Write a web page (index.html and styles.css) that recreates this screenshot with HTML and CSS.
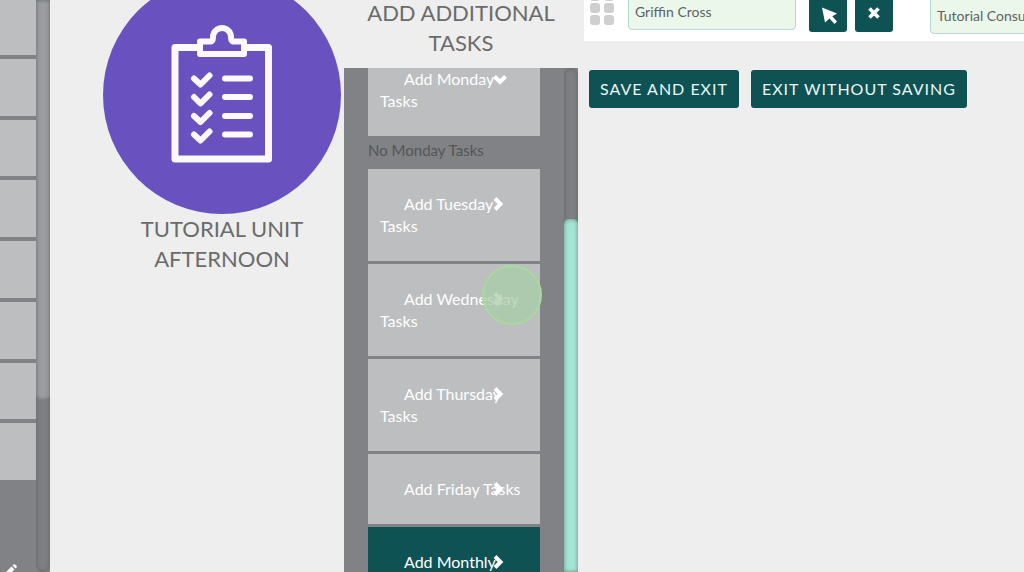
FILE: index.html
```
<!DOCTYPE html>
<html lang="en">
<head>
<meta charset="utf-8">
<title>Tutorial Unit Tasks</title>
<link rel="stylesheet" href="styles.css">
</head>
<body>
<div class="app">
  <aside class="rail">
    <div class="rail-main">
      <div class="rail-cells">
        <div class="cell"></div><div class="cell"></div><div class="cell"></div><div class="cell"></div>
        <div class="cell"></div><div class="cell"></div><div class="cell"></div><div class="cell"></div>
      </div>
      <svg class="pencil" width="12" height="12" viewBox="0 0 12 12" aria-hidden="true"><path d="M0 9 L6.500 2.500 L9.500 5.500 L3 12 L0 12Z M7.500 1.500 L8.500 .5 Q9.500 -.2 10.400 .7 L11.500 1.800 Q12.200 2.700 11.500 3.500 L10.500 4.500Z" fill="#fff"/></svg>
    </div>
    <div class="track rail-track"><div class="thumb rail-thumb"></div></div>
  </aside>

  <section class="unit">
    <div class="unit-disc">
      <svg width="102" height="140" viewBox="0 0 102 140" fill="none" stroke="#fbf8ff" aria-hidden="true">
        <path d="M27 22.500 H4 V134 H97.500 V22.500 H74" stroke-width="7" stroke-linejoin="round"/>
        <path d="M29 16.500 H40 Q42 16 42 12 A9 9 0 0 1 60 12 Q60 16 62 16.500 H73 V29 H29Z" stroke-width="6" stroke-linejoin="round"/>
        <g stroke-width="6" stroke-linecap="round" stroke-linejoin="round">
          <path d="M23 53.500 L29.500 59.500 L38.500 50.500"/><path d="M23 72 L29.500 78.500 L38.500 69.500"/>
          <path d="M23 91 L29.500 97 L38.500 88"/><path d="M23 109.500 L29.500 115.500 L38.500 106.500"/>
          <path d="M54 53.500 H79 M54 72 H79 M54 91 H79 M54 109.500 H79"/>
        </g>
      </svg>
    </div>
    <h2 class="heading">Tutorial Unit Afternoon</h2>
  </section>

  <section class="extra">
    <h2 class="heading extra-heading">Add Additional Tasks</h2>
    <div class="panel">
      <div class="task-list">
        <button class="task" type="button">Add Monday Tasks<svg class="chev" viewBox="0 0 16 16" aria-hidden="true"><path d="M2.500 5.500 L8 11 L13.500 5.500"/></svg></button>
        <p class="empty">No Monday Tasks</p>
        <button class="task" type="button">Add Tuesday Tasks<svg class="chev" viewBox="0 0 16 16" aria-hidden="true"><path d="M3 2.500 L8.500 8 L3 13.500"/></svg></button>
        <button class="task" type="button">Add Wednesday Tasks<svg class="chev" viewBox="0 0 16 16" aria-hidden="true"><path d="M3 2.500 L8.500 8 L3 13.500"/></svg><span class="pointer"></span></button>
        <button class="task" type="button">Add Thursday Tasks<svg class="chev" viewBox="0 0 16 16" aria-hidden="true"><path d="M3 2.500 L8.500 8 L3 13.500"/></svg></button>
        <button class="task" type="button">Add Friday Tasks<svg class="chev" viewBox="0 0 16 16" aria-hidden="true"><path d="M3 2.500 L8.500 8 L3 13.500"/></svg></button>
        <button class="task task-active" type="button">Add Monthly<svg class="chev" viewBox="0 0 16 16" aria-hidden="true"><path d="M3 2.500 L8.500 8 L3 13.500"/></svg></button>
      </div>
      <div class="track panel-track"><div class="thumb panel-thumb"></div></div>
    </div>
  </section>

  <main class="editor">
    <div class="entry">
      <div class="grip"><i></i><i></i><i></i><i></i><i></i><i></i></div>
      <input class="field" type="text" value="Griffin Cross" aria-label="Client">
      <button class="icon-btn pick" type="button" aria-label="Select"><svg width="18" height="18" viewBox="0 0 18 18" fill="#fff" aria-hidden="true"><path d="M1 .5 L16 6.500 L11.300 9.200 L16 14.500 L13.500 17 L8.500 11.500 L4 15.500Z"/></svg></button>
      <button class="icon-btn" type="button" aria-label="Remove"><svg width="12" height="12" viewBox="0 0 12 12" stroke="#fff" stroke-width="3.600" aria-hidden="true"><path d="M1.500 1.500 L10.500 10.500 M10.500 1.500 L1.500 10.500"/></svg></button>
      <input class="field service" type="text" value="Tutorial Consultation" aria-label="Service">
    </div>
    <div class="actions">
      <button class="btn" type="button">Save and exit</button>
      <button class="btn" type="button">Exit without saving</button>
    </div>
  </main>
</div>
</body>
</html>
```
FILE: styles.css
```
* { box-sizing: border-box; }

body {
  margin: 0;
  background: #eeeeee;
  color: #6b6b6b;
  font-family: Lato, "Liberation Sans", sans-serif;
  font-size: 16px;
  line-height: 22px;
}

button, input { font: inherit; }

.app {
  display: flex;
  height: 100vh;
  overflow: hidden;
}

/* Left rail */
.rail {
  display: flex;
  flex: none;
  width: 50px;
  background: #808285;
}
.rail-main {
  display: flex;
  flex: 1;
  flex-direction: column;
  justify-content: space-between;
  overflow: hidden;
}
.rail-cells {
  display: grid;
  grid-template-rows: repeat(8, 1fr);
  gap: 4px;
  height: 482px;
  margin-top: -2px;
}
.cell { background: #bcbec0; }
.pencil {
  flex: none;
  margin: 0 0 -4px 5px;
}

/* Scrollbars */
.track {
  display: flex;
  flex: none;
  width: 14px;
  border-radius: 7px;
  background: #7d7f82;
  box-shadow: inset 0 0 4px #626467;
}
.thumb {
  flex: 1;
  border-radius: 5px;
  box-shadow: inset 0 0 4px rgba(60, 70, 70, .6);
}
.rail-track { border-radius: 0 0 7px 7px; }
.rail-thumb {
  height: 70%;
  border-radius: 0 0 5px 5px;
  background: #9b9da0;
}
.panel-track {
  align-items: flex-end;
  border-radius: 7px 7px 0 0;
}
.panel-thumb {
  height: 70%;
  border-radius: 5px 5px 0 0;
  background: #a4e6d5;
}

/* Unit summary */
.unit {
  display: flex;
  flex: none;
  flex-direction: column;
  align-items: center;
  width: 294px;
  padding-left: 50px;
}
.unit-disc {
  display: flex;
  flex: none;
  align-items: center;
  justify-content: center;
  width: 238px;
  height: 238px;
  margin-top: -24px;
  border-radius: 50%;
  background: #6951c0;
}
.heading {
  margin: 0;
  padding: 0 24px;
  font-size: 22px;
  font-weight: 400;
  line-height: 30px;
  text-align: center;
  text-transform: uppercase;
}

/* Additional tasks */
.extra {
  display: flex;
  flex: none;
  flex-direction: column;
  width: 234px;
}
.extra-heading {
  margin-top: -2px;
  padding: 0 12px 10px;
}
.panel {
  display: flex;
  flex: 1;
  min-height: 0;
  overflow: hidden;
  background: #808285;
}
.task-list {
  display: flex;
  flex: 1;
  flex-direction: column;
  gap: 3px;
  padding: 0 24px;
  margin-top: -24px;
}
.task {
  position: relative;
  flex: none;
  padding: 24px 12px;
  border: 0;
  background: #bcbec0;
  color: #fff;
  text-align: left;
  text-indent: 24px;
}
.task-active { background: #0e5254; }
.chev {
  position: absolute;
  top: 27px;
  left: 124px;
  width: 16px;
  height: 16px;
  fill: none;
  stroke: #fff;
  stroke-width: 4;
}
.empty {
  flex: none;
  height: 27px;
  margin: 0;
  color: #545658;
  font-size: 15px;
}
.pointer {
  position: absolute;
  top: 1px;
  left: 114px;
  z-index: 1;
  width: 60px;
  height: 60px;
  border: 2px solid #a9d99e;
  border-radius: 50%;
  background: rgba(170, 206, 168, .75);
}

/* Editor */
.editor {
  flex: 1;
  min-width: 0;
  padding-left: 6px;
  overflow: hidden;
}
.entry {
  display: flex;
  align-items: flex-start;
  margin-top: -8px;
  padding: 0 0 7px 6px;
  background: #fff;
}
.grip {
  display: grid;
  grid-template-columns: 10px 10px;
  gap: 2px 4px;
  margin: -1px 14px 0 0;
}
.grip i {
  height: 10px;
  border-radius: 3px;
  background: #cfcfcf;
}
.field {
  flex: none;
  width: 168px;
  height: 38px;
  margin-right: 13px;
  padding: 0 6px;
  border: 1px solid #b5d8d0;
  border-radius: 4px;
  background: #ebf7eb;
  color: #606262;
  font-size: 14px;
}
.service { margin: 4px 0 0 29px; }
.icon-btn {
  display: flex;
  flex: none;
  align-items: center;
  justify-content: center;
  width: 38px;
  height: 38px;
  margin: 2px 8px 0 0;
  padding: 0;
  border: 0;
  border-radius: 3px;
  background: #0e5254;
}
.pick { padding: 6px 0 0 4px; }
.actions {
  display: flex;
  gap: 12px;
  padding: 29px 5px;
}
.btn {
  flex: none;
  padding: 8px 11px;
  border: 0;
  border-radius: 3px;
  background: #0e5254;
  color: #eaf7f4;
  letter-spacing: 1px;
  text-transform: uppercase;
}
```
